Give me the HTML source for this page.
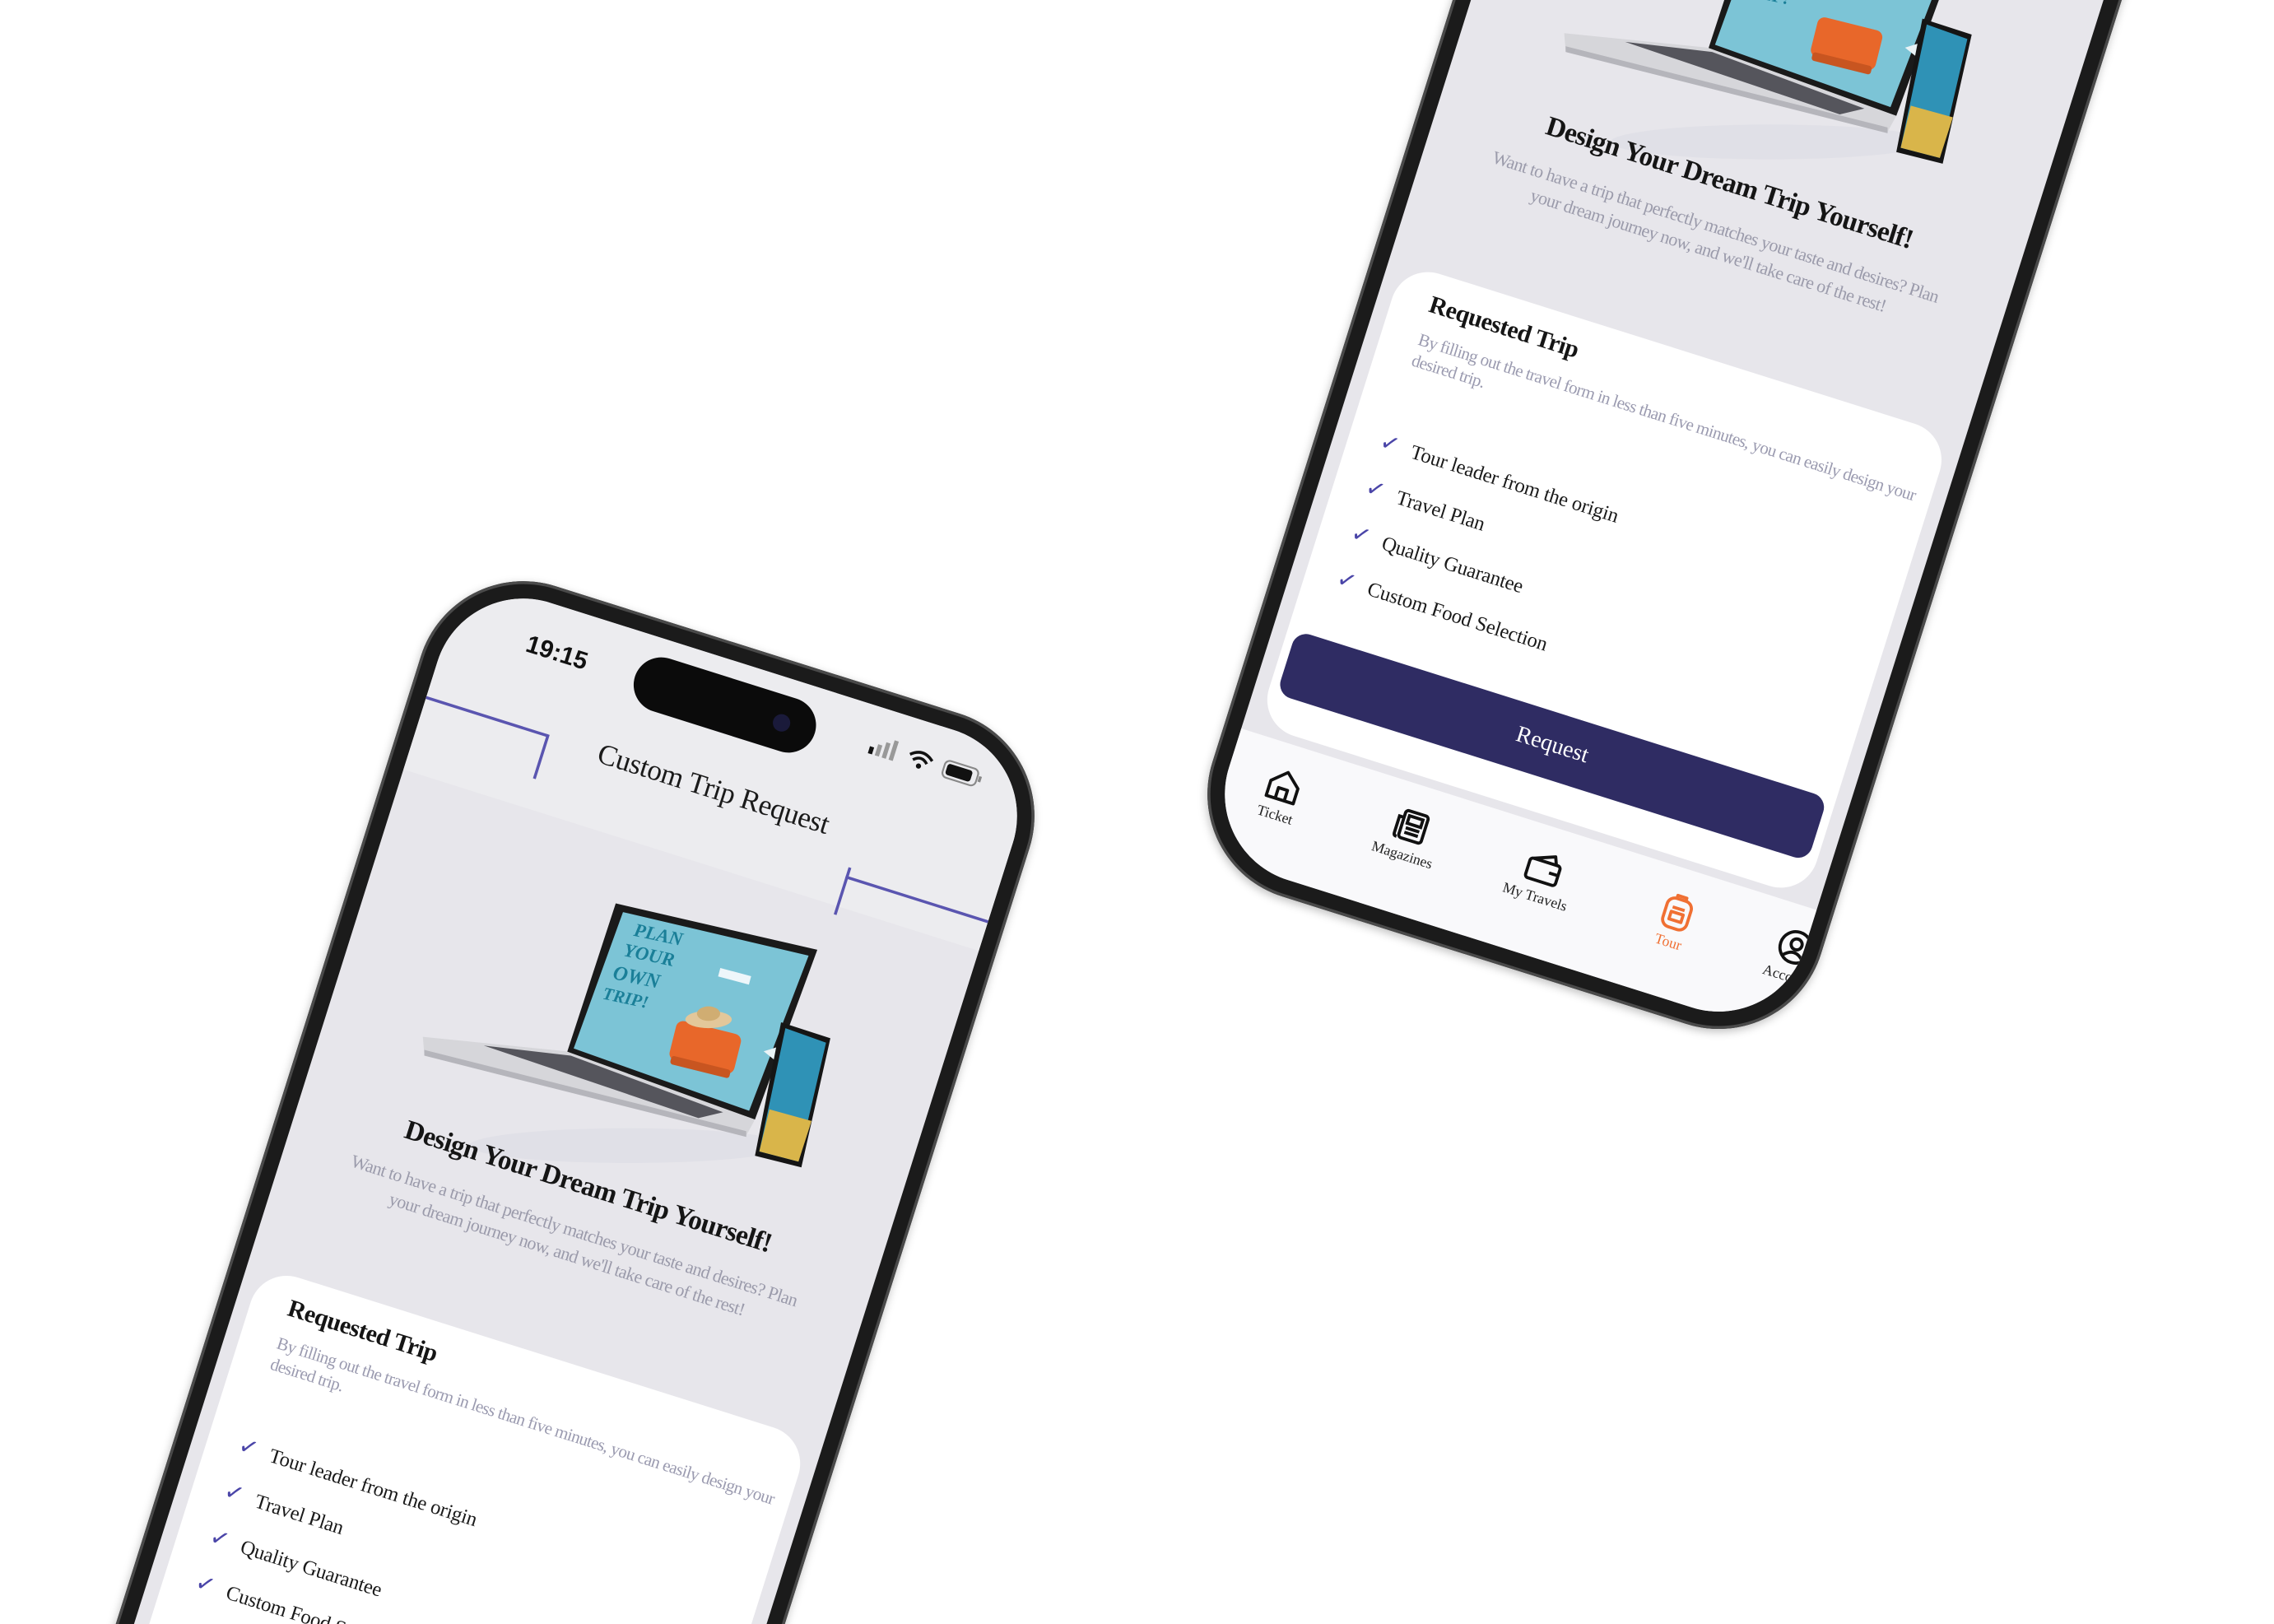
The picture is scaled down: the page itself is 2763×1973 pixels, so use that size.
<!DOCTYPE html>
<html><head><meta charset="utf-8"><style>
html{margin:0;padding:0;width:2763px;height:1973px;overflow:hidden;background:#fff;}
body{margin:0;padding:0;background:#fff;width:2763px;height:1973px;overflow:hidden;position:relative;}
#c{position:absolute;left:0;top:0;width:1568px;height:1120px;overflow:hidden;transform:scale(1.7621);transform-origin:0 0;}
.phone{position:absolute;width:440px;height:950px;border-radius:74px;background:#1b1b1b;transform-origin:220px 390px;transform:rotate(17.5deg);box-shadow:inset 0 0 0 2px #4a4a4a, 0 2px 6px rgba(0,0,0,.25);}
.screen{position:absolute;left:12px;top:12px;width:416px;height:926px;border-radius:62px;overflow:hidden;background:#e7e6eb;font-family:"Liberation Serif",serif;}
.abs{position:absolute;}
.ctr{position:absolute;left:0;width:416px;text-align:center;}
.hdr{position:absolute;left:0;top:0;width:416px;height:140px;background:#ececef;}
.line{position:absolute;background:#5a55b0;}
.title{font-size:20px;color:#1a1a1a;letter-spacing:-0.2px;}
.h2{font-size:19px;font-weight:bold;color:#151515;letter-spacing:-0.4px;}
.p{font-size:12.5px;color:#9b9bab;line-height:17px;letter-spacing:-0.4px;}
.card{position:absolute;left:10px;top:496px;width:396px;height:334px;background:#fff;border-radius:26px;}
.rt{position:absolute;left:26px;top:12px;font-size:17px;font-weight:bold;color:#151515;letter-spacing:-0.3px;}
.desc{position:absolute;left:26px;top:40px;width:375px;font-size:12px;color:#9b9bb0;line-height:15px;letter-spacing:-0.4px;}
.li{position:absolute;left:22px;font-size:14px;color:#1a1a1a;letter-spacing:-0.1px;}
.li b{color:#4a45a8;font-weight:bold;margin-right:9px;font-family:"DejaVu Sans",sans-serif;font-size:16px;}
.btn{position:absolute;left:6px;top:264px;width:384px;height:46px;border-radius:10px;background:#2f2c63;color:#fff;font-size:16px;text-align:center;line-height:46px;}
.nav{position:absolute;left:0;top:836px;width:416px;height:90px;background:#f9f9fb;}
.ni{position:absolute;top:16px;width:80px;margin-left:-40px;text-align:center;font-size:10px;color:#222;}
.ni svg{display:block;margin:0 auto 3px;}
.lap{position:absolute;left:53px;top:170px;width:295px;height:195px;transform:rotate(-17.5deg);}
</style></head><body><div id="c">

<!-- LEFT PHONE -->
<div class="phone" style="left:185px;top:430px;">
 <div class="screen">
  <div class="hdr"></div>
  <div class="abs" style="left:55px;top:22px;font-family:'Liberation Sans',sans-serif;font-weight:bold;font-size:17px;color:#111;">19:15</div>
  <div class="abs" style="left:133px;top:12px;width:130px;height:38px;border-radius:19px;background:#0b0b0b;"><div class="abs" style="left:100px;top:13px;width:12px;height:12px;border-radius:6px;background:#1a1a3a;"></div></div>
  <svg class="abs" style="left:300px;top:18px" width="90" height="18" viewBox="0 0 90 18">
   <rect x="2" y="10" width="3" height="5" fill="#111"/><rect x="7" y="7" width="3" height="8" fill="#999"/><rect x="12" y="4" width="3" height="11" fill="#999"/><rect x="17" y="1" width="3" height="14" fill="#999"/>
   <path d="M30 7 Q38 0 46 7 M33 10 Q38 5 43 10" stroke="#111" stroke-width="2" fill="none"/><circle cx="38" cy="13" r="1.8" fill="#111"/>
   <rect x="55" y="3" width="24" height="12" rx="3.5" fill="none" stroke="#888" stroke-width="1.2"/><rect x="57" y="5" width="18" height="8" rx="2" fill="#111"/><rect x="80" y="7" width="2" height="4" fill="#888"/>
  </svg>
  <div class="line" style="left:-2px;top:87px;width:90px;height:2px;"></div>
  <div class="line" style="left:87px;top:87px;width:2px;height:32px;"></div>
  <div class="line" style="left:313px;top:112px;width:2px;height:34px;"></div>
  <div class="line" style="left:313px;top:118px;width:110px;height:2px;"></div>
  <div class="ctr title" style="top:78px;">Custom Trip Request</div>
  <svg class="lap" viewBox="0 0 295 195">
   <ellipse cx="150" cy="175" rx="110" ry="12" fill="#dcdce4" opacity=".6"/>
   <polygon points="141,8 280,40 237,157 107,112" fill="#1a1a1a"/>
   <polygon points="146,14 274,44 233,151 112,108" fill="#7cc4d6"/>
   <g transform="rotate(12 160 45)" font-family="Liberation Serif" font-weight="bold" font-style="italic" fill="#1a7f98">
    <text x="150" y="32" font-size="13">PLAN</text><text x="146" y="47" font-size="13">YOUR</text><text x="142" y="64" font-size="14">OWN</text><text x="138" y="79" font-size="12">TRIP!</text>
   </g>
   <rect x="212" y="55" width="22" height="6" fill="#eef6fa" transform="rotate(15 222 58)"/>
   <g transform="rotate(14 202 106)"><rect x="180" y="93" width="46" height="28" rx="5" fill="#e8672a"/><rect x="182" y="118" width="42" height="6" rx="2" fill="#c85520"/></g>
   <ellipse cx="205" cy="88" rx="16" ry="6" fill="#e3c79a"/><ellipse cx="205" cy="84" rx="8" ry="5" fill="#d0ad72"/>
   <polygon points="8,100 107,110 237,157 231,168 9,112" fill="#d6d6da"/>
   <polygon points="9,109 231,165 231,169 9,113" fill="#b5b5bb"/>
   <polygon points="50,106 110,113 215,152 198,156" fill="#55555c"/>
   <polygon points="243,110 262,104 258,122" fill="#e9f3f6"/>
   <polygon points="255,90 289,101 269,190 237,182" fill="#151515"/>
   <polygon points="258,94 286,104 267,186 240,179" fill="#2f92b6"/>
   <polygon points="247,150 276,158 267,186 240,179" fill="#d9b54a"/>
  </svg>
  <div class="ctr h2" style="top:366px;">Design Your Dream Trip Yourself!</div>
  <div class="ctr p" style="top:400px;left:36px;width:344px;">Want to have a trip that perfectly matches your taste and desires? Plan your dream journey now, and we'll take care of the rest!</div>
  <div class="card">
   <div class="rt">Requested Trip</div>
   <div class="desc">By filling out the travel form in less than five minutes, you can easily design your desired trip.</div>
   <div class="li" style="top:112px"><b>✓</b>Tour leader from the origin</div>
   <div class="li" style="top:145px"><b>✓</b>Travel Plan</div>
   <div class="li" style="top:178px"><b>✓</b>Quality Guarantee</div>
   <div class="li" style="top:211px"><b>✓</b>Custom Food Selection</div>
   <div class="btn">Request</div>
  </div>
 </div>
</div>

<!-- RIGHT PHONE -->
<div class="phone" style="left:972px;top:-262px;">
 <div class="screen">
  <div class="hdr"></div>
  <div class="ctr title" style="top:78px;">Custom Trip Request</div>
  <svg class="lap" viewBox="0 0 295 195">
   <ellipse cx="150" cy="175" rx="110" ry="12" fill="#dcdce4" opacity=".6"/>
   <polygon points="141,8 280,40 237,157 107,112" fill="#1a1a1a"/>
   <polygon points="146,14 274,44 233,151 112,108" fill="#7cc4d6"/>
   <g transform="rotate(12 160 45)" font-family="Liberation Serif" font-weight="bold" font-style="italic" fill="#1a7f98">
    <text x="150" y="32" font-size="13">PLAN</text><text x="146" y="47" font-size="13">YOUR</text><text x="142" y="64" font-size="14">OWN</text><text x="138" y="79" font-size="12">TRIP!</text>
   </g>
   <g transform="rotate(14 202 106)"><rect x="180" y="93" width="46" height="28" rx="5" fill="#e8672a"/><rect x="182" y="118" width="42" height="6" rx="2" fill="#c85520"/></g>
   <polygon points="8,100 107,110 237,157 231,168 9,112" fill="#d6d6da"/>
   <polygon points="9,109 231,165 231,169 9,113" fill="#b5b5bb"/>
   <polygon points="50,106 110,113 215,152 198,156" fill="#55555c"/>
   <polygon points="243,110 262,104 258,122" fill="#e9f3f6"/>
   <polygon points="255,90 289,101 269,190 237,182" fill="#151515"/>
   <polygon points="258,94 286,104 267,186 240,179" fill="#2f92b6"/>
   <polygon points="247,150 276,158 267,186 240,179" fill="#d9b54a"/>
  </svg>
  <div class="ctr h2" style="top:366px;">Design Your Dream Trip Yourself!</div>
  <div class="ctr p" style="top:400px;left:36px;width:344px;">Want to have a trip that perfectly matches your taste and desires? Plan your dream journey now, and we'll take care of the rest!</div>
  <div class="card">
   <div class="rt">Requested Trip</div>
   <div class="desc">By filling out the travel form in less than five minutes, you can easily design your desired trip.</div>
   <div class="li" style="top:112px"><b>✓</b>Tour leader from the origin</div>
   <div class="li" style="top:145px"><b>✓</b>Travel Plan</div>
   <div class="li" style="top:178px"><b>✓</b>Quality Guarantee</div>
   <div class="li" style="top:211px"><b>✓</b>Custom Food Selection</div>
   <div class="btn">Request</div>
  </div>
  <div class="nav">
   <div class="ni" style="left:40px;"><svg width="26" height="26" viewBox="0 0 24 24" fill="none" stroke="#111" stroke-width="2" stroke-linejoin="round"><path d="M3 11 L12 3 L21 11 V21 H3 Z"/><path d="M9 21 V14 H15 V21"/></svg>Ticket</div>
   <div class="ni" style="left:132px;"><svg width="26" height="26" viewBox="0 0 24 24" fill="none" stroke="#111" stroke-width="2"><rect x="6" y="3" width="15" height="18" rx="2"/><path d="M6 8 H3 V19 Q3 21 5 21"/><rect x="9" y="6" width="9" height="5"/><path d="M9 14 H18 M9 17 H18"/></svg>Magazines</div>
   <div class="ni" style="left:228px;"><svg width="26" height="26" viewBox="0 0 24 24" fill="none" stroke="#111" stroke-width="2" stroke-linejoin="round"><rect x="2" y="8" width="20" height="13" rx="2"/><path d="M4 8 L17 3 L19 8"/><path d="M16 14 H22"/></svg>My Travels</div>
   <div class="ni" style="left:325px;color:#f07033;"><svg width="26" height="28" viewBox="0 0 24 26" fill="none" stroke="#f07033" stroke-width="2" stroke-linejoin="round"><path d="M9 5 V3 H15 V5"/><rect x="4" y="5" width="16" height="19" rx="5"/><path d="M8 14 H16 V19 H8 Z"/><path d="M8 11 H16"/></svg>Tour</div>
   <div class="ni" style="left:410px;"><svg width="26" height="26" viewBox="0 0 24 24" fill="none" stroke="#111" stroke-width="2"><circle cx="12" cy="12" r="10"/><circle cx="12" cy="10" r="3.5"/><path d="M5.5 19 Q12 12 18.5 19"/></svg>Account</div>
  </div>
 </div>
</div>

</div></body></html>
